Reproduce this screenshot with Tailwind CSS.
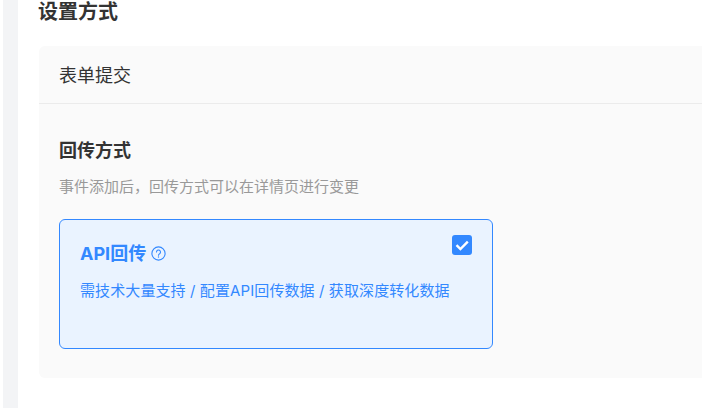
<!DOCTYPE html>
<html lang="zh">
  <head>
    <meta charset="UTF-8" />
    <meta name="viewport" content="width=device-width, initial-scale=1.0" />
    <script src="https://cdn.jsdelivr.net/npm/@tailwindcss/browser@4"></script>
    <title>设置方式</title>
  </head>
  <body class="bg-white h-[408px] w-[702px] overflow-hidden font-['Inter','Noto_Sans_CJK_SC',sans-serif]">
    <div class="flex h-full pl-[3px]">
      <!-- left rail -->
      <div class="w-[15px] shrink-0 bg-[#f3f4f6]"></div>

      <main class="flex-1 min-w-0 pl-5">
        <h2 class="h-[46px] pt-px text-[20px] leading-[23px] font-bold text-[#333]">设置方式</h2>

        <div class="ml-px h-[332px] rounded-l-md bg-[#fafafa]">
          <div class="h-[58px] border-b border-[#ebebeb] pl-5 pt-px text-[18px] leading-[57px] text-[#333]">表单提交</div>

          <div class="pl-5 pt-[33px]">
            <h3 class="text-[18px] leading-[27px] font-bold text-[#333]">回传方式</h3>
            <p class="mt-3 text-[15px] leading-[22px] text-[#999]">事件添加后，回传方式可以在详情页进行变更</p>

            <!-- option card -->
            <div class="relative mt-[21px] h-[130px] w-[434px] rounded-md border border-[#3388ff] bg-[#eaf3ff] pl-5 pt-[20px]">
              <div class="flex items-center gap-[5px]">
                <span class="text-[18px] leading-[27px] font-bold text-[#3388ff]">API回传</span>
                <svg class="w-[15px] h-[15px] text-[#3388ff]" viewBox="0 0 15 15" fill="none" stroke="currentColor" stroke-width="1.1">
                  <circle cx="7.5" cy="7.5" r="6.6" />
                  <path d="M5.5 6a2 2 0 1 1 3.1 1.7c-.7.4-1.1.8-1.1 1.6" stroke-linecap="round" />
                  <circle cx="7.5" cy="11" r=".7" fill="currentColor" stroke="none" />
                </svg>
              </div>
              <p class="mt-[13px] text-[15px] leading-[22px] tracking-[0.1px] text-[#3388ff] whitespace-nowrap">需技术大量支持 / 配置API回传数据 / 获取深度转化数据</p>

              <div class="absolute right-5 top-[15px] flex h-5 w-5 items-center justify-center rounded-[3px] bg-[#3388ff]">
                <svg class="w-4 h-4" viewBox="0 0 16 16" fill="none" stroke="white" stroke-width="2.4">
                  <path d="M2.5 8.2 6.4 12 13.8 4.6" />
                </svg>
              </div>
            </div>
          </div>
        </div>
      </main>
    </div>
  </body>
</html>
